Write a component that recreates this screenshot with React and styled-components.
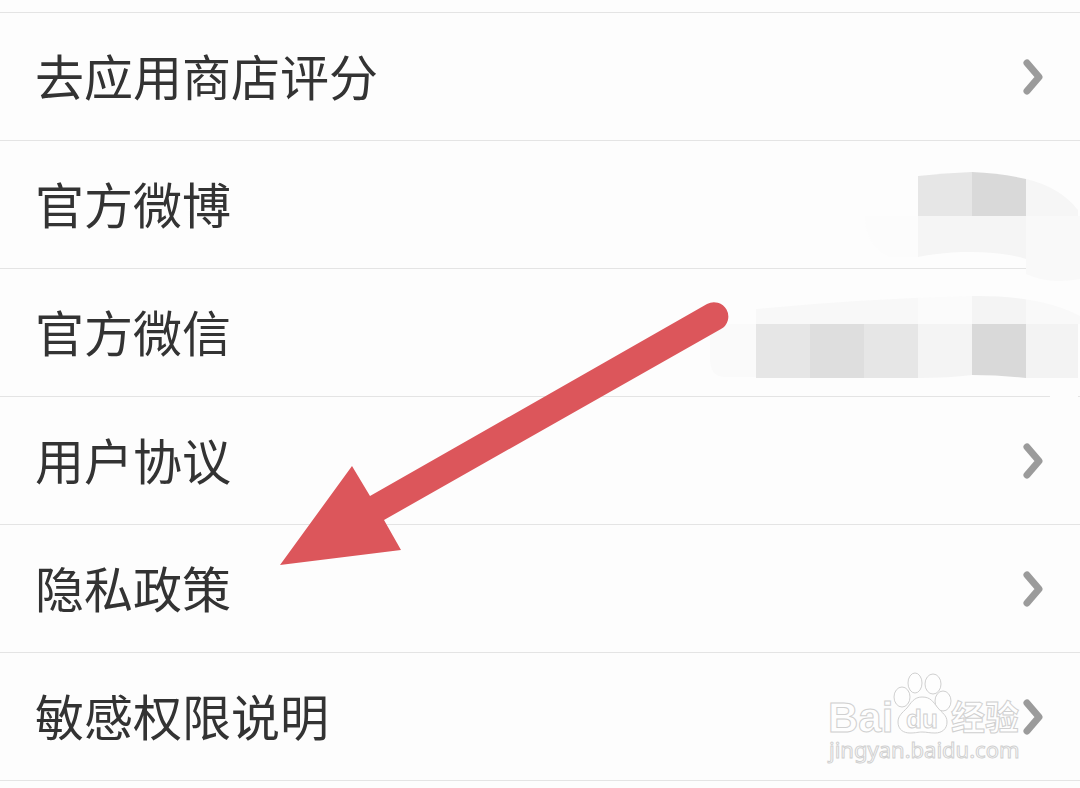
import styled, { createGlobalStyle } from 'styled-components'

const colors = {
  background: '#fdfdfd',
  text: '#333333',
  line: '#e4e4e4',
  chevron: '#9b9b9b',
  arrow: '#dc565b',
  watermark: '#cccccc',
}

const GlobalStyle = createGlobalStyle`
  * {
    box-sizing: border-box;
  }
  body {
    margin: 0;
    background-color: ${colors.background};
    color: ${colors.text};
    font-family: 'Noto Sans CJK SC', 'Noto Sans', sans-serif;
  }
`

const Page = styled.main`
  position: relative;
  padding-top: 12px;
  min-height: 100vh;
  overflow: hidden;
`

const List = styled.ul`
  list-style: none;
  margin: 0;
  padding: 0;
  border-bottom: 1px solid ${colors.line};
`

const Item = styled.li`
  position: relative;
  border-top: 1px solid ${colors.line};
`

const Row = styled.div`
  display: flex;
  align-items: center;
  justify-content: space-between;
  min-height: 127px;
  padding: 0 36px 0 35px;
  color: inherit;
  text-decoration: none;
`

const Label = styled.span`
  padding-bottom: 4px;
  font-size: 49px;
  line-height: 72px;
`

const Chevron = styled.svg`
  flex: none;
  width: 20px;
  height: 36px;
  fill: none;
  stroke: ${colors.chevron};
  stroke-width: 7;
  stroke-linecap: round;
  stroke-linejoin: round;
  overflow: visible;
`

const Mosaic = styled.svg`
  position: absolute;
  z-index: 1;
  top: 0;
  right: 0;
  width: 380px;
  height: 148px;
  pointer-events: none;
`

const Arrow = styled.svg`
  position: absolute;
  z-index: 2;
  top: 300px;
  left: 280px;
  width: 450px;
  height: 268px;
  fill: ${colors.arrow};
  pointer-events: none;
`

const Watermark = styled.svg`
  position: absolute;
  z-index: 2;
  top: 668px;
  right: 50px;
  width: 210px;
  height: 100px;
  fill: #ffffff;
  stroke: ${colors.watermark};
  stroke-width: 1;
  opacity: 0.9;
  pointer-events: none;
`

const BrandText = styled.text`
  font-family: 'Liberation Sans', sans-serif;
  font-size: ${({ $size }) => $size}px;
  font-weight: bold;
`

const BrandHanzi = styled.text`
  font-family: 'Noto Sans CJK SC', sans-serif;
  font-size: 34px;
  font-weight: bold;
`

const SiteText = styled.text`
  font-family: 'Noto Sans', sans-serif;
  font-size: 22px;
`

function WeiboMosaic() {
  return (
    <Mosaic viewBox="0 0 380 148" aria-hidden="true">
      <clipPath id="weibo-top">
        <path d="M218 35Q246 32 272 31Q300 32 326 38Q360 46 378 69V75H218Z" />
      </clipPath>
      <path d="M165 75H218V116H190Q165 104 165 75Z" fill="#fcfcfc" />
      <g clipPath="url(#weibo-top)">
        <rect x="218" y="28" width="54" height="48" fill="#e6e6e6" />
        <rect x="272" y="28" width="54" height="48" fill="#d9d9d9" />
        <rect x="326" y="28" width="54" height="48" fill="#f6f6f6" />
      </g>
      <path d="M218 75H326V118Q300 110 262 111Q238 112 218 116Z" fill="#f5f5f5" />
      <path d="M326 75H380V138Q350 144 326 133Z" fill="#f9f9f9" />
    </Mosaic>
  )
}

function WechatMosaic() {
  return (
    <Mosaic viewBox="0 0 380 148" aria-hidden="true">
      <clipPath id="wechat-shape">
        <path d="M56 40Q160 30 272 27Q340 26 380 47V109H326Q300 106 272 106Q250 109 218 109H56Z" />
      </clipPath>
      <path d="M56 55H24Q10 55 10 72V90Q10 108 26 108H56Z" fill="#fafafa" />
      <g clipPath="url(#wechat-shape)">
        <rect x="56" y="20" width="162" height="35" fill="#f8f8f8" />
        <rect x="218" y="20" width="54" height="35" fill="#fbfbfb" />
        <rect x="272" y="20" width="54" height="35" fill="#f4f4f4" />
        <rect x="326" y="20" width="54" height="35" fill="#f9f9f9" />
        <rect x="56" y="55" width="54" height="54" fill="#e6e6e6" />
        <rect x="110" y="55" width="54" height="54" fill="#dedede" />
        <rect x="164" y="55" width="54" height="54" fill="#e6e6e6" />
        <rect x="218" y="55" width="54" height="54" fill="#f4f4f4" />
        <rect x="272" y="55" width="54" height="54" fill="#d9d9d9" />
        <rect x="326" y="55" width="52" height="54" fill="#f3f3f3" />
      </g>
      <rect x="350" y="124" width="28" height="8" fill={colors.background} />
    </Mosaic>
  )
}

const items = [
  { label: '去应用商店评分', link: true },
  { label: '官方微博', cover: WeiboMosaic },
  { label: '官方微信', cover: WechatMosaic },
  { label: '用户协议', link: true },
  { label: '隐私政策', link: true },
  { label: '敏感权限说明', link: true },
]

function SettingItem({ label, link, cover: Cover }) {
  return (
    <Item>
      <Row as={link ? 'a' : 'div'} href={link ? '#' : undefined}>
        <Label>{label}</Label>
        {link && (
          <Chevron viewBox="0 0 20 36" aria-hidden="true">
            <path d="M3 4L15 18L3 32" />
          </Chevron>
        )}
      </Row>
      {Cover && <Cover />}
    </Item>
  )
}

function App() {
  return (
    <Page>
      <GlobalStyle />
      <List>
        {items.map((item) => (
          <SettingItem key={item.label} {...item} />
        ))}
      </List>
      <Arrow viewBox="0 0 450 268" aria-hidden="true">
        <path d="M0 265L72 166L90 196L427 4A14 14 0 0 1 441 29L104 220L121 250Z" />
      </Arrow>
      <Watermark viewBox="0 0 210 100">
        <BrandText x="8" y="64" $size={42}>
          Bai
        </BrandText>
        <ellipse cx="82" cy="29" rx="8" ry="10" />
        <ellipse cx="95" cy="15" rx="7" ry="10" />
        <ellipse cx="113" cy="16" rx="8" ry="10" />
        <ellipse cx="123" cy="33" rx="8" ry="10" />
        <path d="M102 29C94 29 91 35 87 40C82 45 78 48 78 54C78 62 84 65 90 65C96 65 98 64 102 64C107 64 109 65 115 65C122 65 127 61 127 54C127 47 122 45 118 40C113 34 111 29 102 29Z" />
        <BrandText x="86" y="60" $size={26}>
          du
        </BrandText>
        <BrandHanzi x="131" y="62">
          经验
        </BrandHanzi>
        <SiteText x="9" y="90">
          jingyan.baidu.com
        </SiteText>
      </Watermark>
    </Page>
  )
}

export default App
